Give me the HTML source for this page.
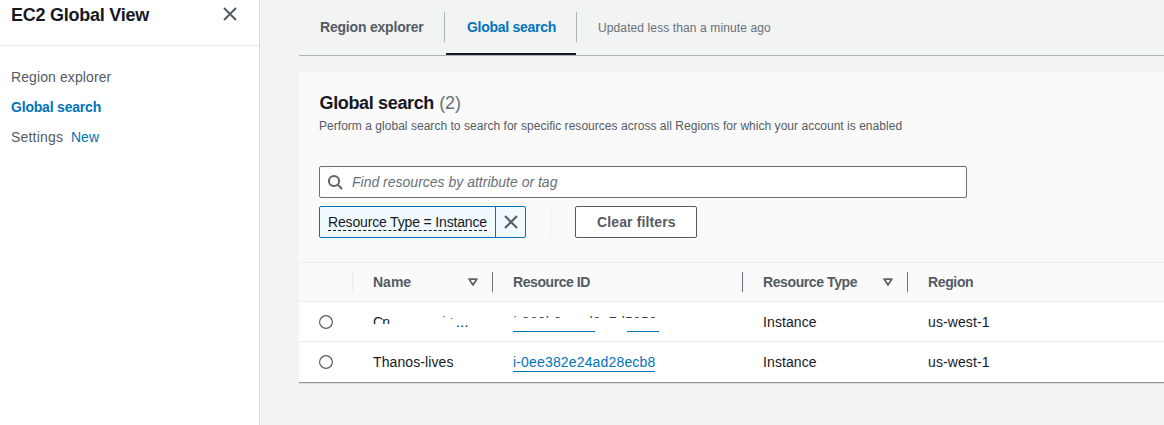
<!DOCTYPE html>
<html><head><meta charset="utf-8">
<style>
*{box-sizing:border-box;margin:0;padding:0}
html,body{width:1164px;height:425px;overflow:hidden;background:#f2f3f3;font-family:"Liberation Sans",sans-serif;color:#16191f;font-size:14px}
.abs{position:absolute;white-space:nowrap}
#side{position:absolute;left:0;top:0;width:260px;height:425px;background:#fff;border-right:1px solid #d5dbdb}
#sidehr{position:absolute;left:0;top:45px;width:259px;height:1px;background:#eaeded}
.nav{color:#545b64;font-size:14px}
.blue{color:#0073bb}
.b{font-weight:bold}
#tabline{position:absolute;left:299px;top:55px;width:865px;height:1px;background:#aab7b8}
#tabul{position:absolute;left:446px;top:53px;width:130px;height:2px;background:#16191f}
.vsep{position:absolute;width:1px;background:#aab7b8}
#card{position:absolute;left:299px;top:72px;width:880px;height:310px;background:#fafafa;}
#search{position:absolute;left:319px;top:166px;width:648px;height:32px;border:1px solid #687078;background:#fff;border-radius:2px}
#token{position:absolute;left:319px;top:206px;width:207px;height:32px;border:1px solid #0073bb;background:#f1faff;border-radius:2px}
#tokdiv{position:absolute;left:495px;top:206px;width:1px;height:32px;background:#0073bb}
#clear{position:absolute;left:575px;top:206px;width:122px;height:32px;border:1px solid #545b64;background:#fff;border-radius:2px}
#thead{position:absolute;left:299px;top:262px;width:865px;height:40px;background:#fafafa;border-top:1px solid #eaeded;border-bottom:1px solid #eaeded}
.row{position:absolute;left:299px;width:865px;height:40px;background:#fff;border-bottom:1px solid #eaeded}
.th{font-weight:bold;color:#545b64;font-size:14px}
.radio{position:absolute;width:14px;height:14px;border:1px solid #545b64;border-radius:50%;background:#fff}
.cell{font-size:14px;color:#16191f;letter-spacing:0.1px}
.link{color:#0073bb;border-bottom:1px solid #0073bb;letter-spacing:0.16px}
</style></head><body>
<div id="side"></div>
<div id="sidehr"></div>
<div class="abs b" id="title" style="left:11px;top:5px;font-size:18px;line-height:20px;letter-spacing:-0.25px">EC2 Global View</div>
<svg class="abs" id="closex" style="left:223px;top:7px" width="14" height="14" viewBox="0 0 14 14"><path d="M1 1 L13 13 M13 1 L1 13" stroke="#545b64" stroke-width="2" fill="none"/></svg>
<div class="abs nav" id="nav1" style="left:11px;top:68px;line-height:18px;letter-spacing:0.1px">Region explorer</div>
<div class="abs nav b blue" id="nav2" style="left:11px;top:98px;line-height:18px;letter-spacing:-0.2px">Global search</div>
<div class="abs nav" id="nav3" style="left:11px;top:128px;line-height:18px;letter-spacing:0.2px">Settings</div>
<div class="abs nav blue" id="nav4" style="left:71px;top:128px;line-height:18px">New</div>

<div class="abs b" id="tab1" style="left:320px;top:18px;line-height:18px;color:#545b64;letter-spacing:-0.2px">Region explorer</div>
<div class="abs b blue" id="tab2" style="left:467px;top:18px;line-height:18px;letter-spacing:-0.28px">Global search</div>
<div class="abs" id="upd" style="left:598px;top:19px;line-height:18px;font-size:12px;color:#687078;letter-spacing:0.11px">Updated less than a minute ago</div>
<div class="vsep" style="left:444px;top:12px;height:30px"></div>
<div class="vsep" style="left:576px;top:12px;height:30px"></div>
<div id="tabline"></div>
<div id="tabul"></div>

<div id="card"></div>
<div class="abs b" id="h1" style="left:319.5px;top:93px;font-size:18px;line-height:20px;letter-spacing:-0.35px">Global search <span style="font-weight:normal;color:#687078;letter-spacing:-0.1px;margin-left:0.5px">(2)</span></div>
<div class="abs" id="desc" style="left:319px;top:118px;font-size:12px;line-height:16px;color:#545b64;letter-spacing:0.032px">Perform a global search to search for specific resources across all Regions for which your account is enabled</div>

<div id="search"></div>
<svg class="abs" id="mag" style="left:327px;top:174px" width="18" height="18" viewBox="0 0 18 18"><circle cx="7" cy="7" r="5.1" stroke="#5a6470" stroke-width="2" fill="none"/><path d="M10.6 10.6 L15 15" stroke="#5a6470" stroke-width="2"/></svg>
<div class="abs" id="ph" style="left:352px;top:173px;line-height:18px;font-style:italic;color:#687078">Find resources by attribute or tag</div>

<div id="token"></div><div id="tokdiv"></div>
<div class="abs" id="toktxt" style="left:328px;top:214px;line-height:16px;border-bottom:1px dashed #16191f;letter-spacing:-0.16px">Resource Type = Instance</div>
<svg class="abs" id="tokx" style="left:504px;top:215px" width="14" height="14" viewBox="0 0 14 14"><path d="M1 1 L13 13 M13 1 L1 13" stroke="#545b64" stroke-width="2" fill="none"/></svg>
<div class="vsep" style="left:550px;top:206px;height:32px;background:#eaeded"></div>
<div id="clear"></div>
<div class="abs b" id="cleart" style="left:597px;top:213px;line-height:18px;color:#545b64;letter-spacing:0.13px">Clear filters</div>

<div id="thead"></div>
<div class="row" style="top:302px"></div>
<div class="row" style="top:342px;border-bottom:none"></div>
<div id="cardshadow" style="position:absolute;left:299px;top:382px;width:865px;height:1px;background:#8d999c;box-shadow:0 1px 1px 0 rgba(0,28,36,.12)"></div>
<div class="vsep" style="left:352px;top:272px;height:20px;background:#eaeded"></div>
<div class="vsep" style="left:492px;top:272px;height:20px;background:#687078"></div>
<div class="vsep" style="left:742px;top:272px;height:20px;background:#687078"></div>
<div class="vsep" style="left:907px;top:272px;height:20px;background:#687078"></div>
<div class="abs th" id="th1" style="left:373px;top:273px;line-height:18px">Name</div>
<div class="abs th" id="th2" style="left:513px;top:273px;line-height:18px;letter-spacing:-0.43px">Resource ID</div>
<div class="abs th" id="th3" style="left:763px;top:273px;line-height:18px;letter-spacing:-0.4px">Resource Type</div>
<div class="abs th" id="th4" style="left:928px;top:273px;line-height:18px;letter-spacing:-0.36px">Region</div>
<svg class="abs" id="sort1" style="left:468px;top:277px" width="10" height="10" viewBox="0 0 10 10"><path d="M1.1 2.1 H8.9 L5 8 Z" stroke="#5c6570" stroke-width="1.8" fill="none" stroke-linejoin="round"/></svg>
<svg class="abs" id="sort2" style="left:883px;top:277px" width="10" height="10" viewBox="0 0 10 10"><path d="M1.1 2.1 H8.9 L5 8 Z" stroke="#5c6570" stroke-width="1.8" fill="none" stroke-linejoin="round"/></svg>

<svg class="abs" style="left:319px;top:315px" width="14" height="14" viewBox="0 0 14 14"><circle cx="7" cy="7" r="6.4" fill="#fff" stroke="#545b64" stroke-width="1.15"/></svg>
<svg class="abs" style="left:319px;top:355px" width="14" height="14" viewBox="0 0 14 14"><circle cx="7" cy="7" r="6.4" fill="#fff" stroke="#545b64" stroke-width="1.15"/></svg>
<div class="abs" id="r1nclip" style="left:373px;top:313px;width:90px;height:10.5px;overflow:hidden"><div class="abs cell" id="r1n" style="left:0;top:0;line-height:18px;letter-spacing:-0.9px">Cn</div><div class="abs cell" style="left:69.5px;top:0;line-height:18px;height:4.6px;overflow:hidden;color:#545b64">i</div><div class="abs cell" style="left:77px;top:1.5px;line-height:18px;height:4.6px;overflow:hidden;color:#545b64">i</div></div>
<div class="abs cell" id="r1dots" style="left:456px;top:313px;line-height:18px;letter-spacing:0.3px">...</div>
<div class="abs" id="r1iclip" style="left:513px;top:313px;width:150px;height:5.4px;opacity:.85;overflow:hidden"><div class="abs cell blue" id="r1i" style="left:0.5px;top:-0.5px;line-height:18px;letter-spacing:0.22px">i-068b9</div><div class="abs cell blue" id="r1j" style="left:72px;top:-0.5px;line-height:18px;letter-spacing:0.22px">d3a7d5850</div></div>
<div class="abs" style="left:513px;top:331px;width:82px;height:1px;background:#0073bb"></div>
<div class="abs" style="left:627px;top:331px;width:32px;height:1px;background:#0073bb"></div>
<div class="abs cell" id="r1t" style="left:763px;top:313px;line-height:18px">Instance</div>
<div class="abs cell" id="r1r" style="left:928px;top:313px;line-height:18px">us-west-1</div>
<div class="abs cell" id="r2n" style="left:373px;top:353px;line-height:18px">Thanos-lives</div>
<div class="abs cell link" id="r2i" style="left:513px;top:353px;line-height:18px">i-0ee382e24ad28ecb8</div>
<div class="abs cell" id="r2t" style="left:763px;top:353px;line-height:18px">Instance</div>
<div class="abs cell" id="r2r" style="left:928px;top:353px;line-height:18px">us-west-1</div>
</body></html>
